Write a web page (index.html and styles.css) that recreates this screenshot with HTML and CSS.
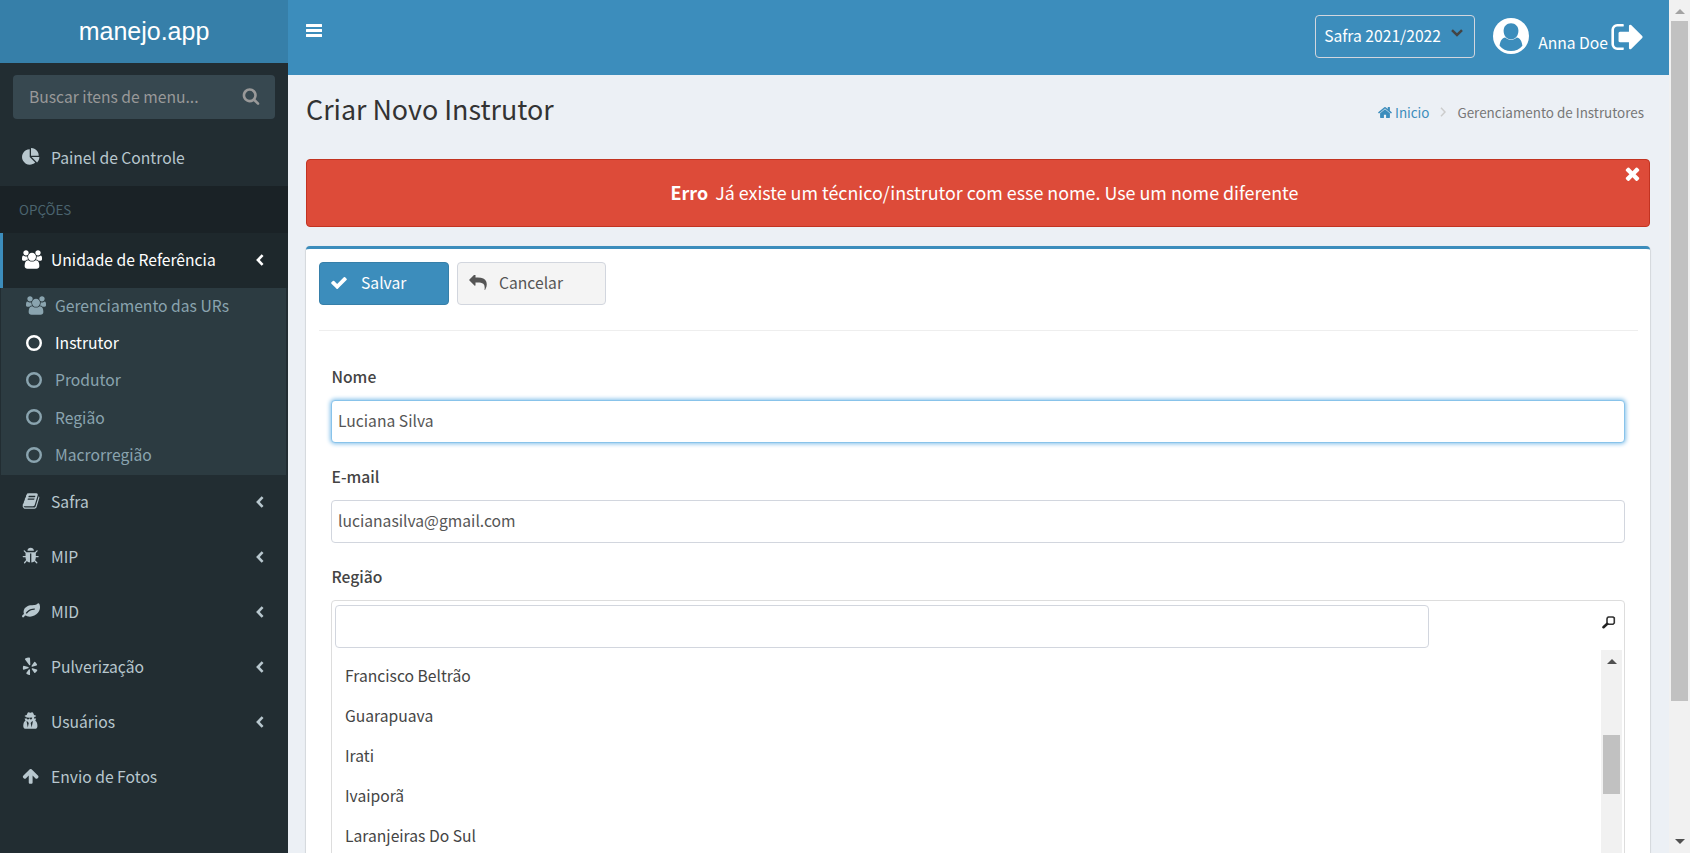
FILE: index.html
```html
<!DOCTYPE html>
<html lang="pt-BR">
<head>
<meta charset="utf-8">
<title>manejo.app</title>
<link rel="stylesheet" href="styles.css">
</head>
<body>
<svg class="defs" aria-hidden="true">
  <symbol id="users" viewBox="0 0 1920 1792"><path d="M593 896q-162 5-265 128h-134q-82 0-138-40.5t-56-118.5q0-353 124-353 6 0 43.5 21t97.5 42.5 119 21.5q67 0 133-23-5 37-5 66 0 159 90 256zm1071 637q0 120-73 189.5t-194 69.5h-874q-121 0-194-69.5t-73-189.5q0-53 3.5-103.5t14-109 26.5-108.5 43-97.5 62-81 85.5-53.5 111.5-20q10 0 43 21.5t73 48 107 48 135 21.5 135-21.5 107-48 73-48 43-21.5q61 0 111.5 20t85.5 53.5 62 81 43 97.5 26.5 108.5 14 109 3.5 103.5zm-1024-1277q0 106-75 181t-181 75-181-75-75-181 75-181 181-75 181 75 75 181zm704 384q0 159-112.5 271.5t-271.5 112.5-271.5-112.5-112.5-271.5 112.5-271.5 271.5-112.5 271.5 112.5 112.5 271.5zm576 225q0 78-56 118.5t-138 40.5h-134q-103-123-265-128 90-97 90-256 0-29-5-66 66 23 133 23 59 0 119-21.5t97.5-42.5 43.5-21q124 0 124 353zm-128-609q0 106-75 181t-181 75-181-75-75-181 75-181 181-75 181 75 75 181z"/></symbol>
  <symbol id="circle" viewBox="0 0 16 16"><circle cx="8" cy="8" r="6.8" fill="none" stroke="currentColor" stroke-width="2.4"/></symbol>
  <symbol id="angle" viewBox="0 0 8 12"><path d="M6.6 1.2 1.9 6l4.7 4.8" fill="none" stroke="currentColor" stroke-width="2.6"/></symbol>
</svg>
<div class="app">
  <aside class="sidebar">
    <a class="logo">manejo.app</a>
    <div class="menu-search">
      <span>Buscar itens de menu...</span>
      <svg class="search-icon" viewBox="0 0 1792 1792"><path d="M1216 832q0-185-131.5-316.5t-316.5-131.5-316.5 131.5-131.5 316.5 131.5 316.5 316.5 131.5 316.5-131.5 131.5-316.5zm512 832q0 52-38 90t-90 38q-54 0-90-38l-343-342q-179 124-399 124-143 0-273.5-55.5t-225-150-150-225-55.5-273.5 55.5-273.5 150-225 225-150 273.5-55.5 273.5 55.5 225 150 150 225 55.5 273.5q0 220-124 399l343 343q37 37 37 90z"/></svg>
    </div>
    <nav class="menu">
      <a class="item first"><svg class="ico" viewBox="0 0 1792 1792"><path d="M768 890l546 546q-106 108-247.5 168t-298.5 60q-209 0-385.5-103t-279.5-279.5-103-385.5 103-385.5 279.5-279.5 385.5-103v762zm187 6h773q0 157-60 298.5t-168 247.5zm709-128h-768v-768q209 0 385.5 103t279.5 279.5 103 385.5z"/></svg><span>Painel de Controle</span></a>
      <div class="menu-header">OPÇÕES</div>
      <a class="item active"><svg class="ico wide"><use href="#users"/></svg><span>Unidade de Referência</span><svg class="angle"><use href="#angle"/></svg></a>
      <div class="submenu">
        <a><svg class="ico wide"><use href="#users"/></svg><span>Gerenciamento das URs</span></a>
        <a class="current"><svg class="dot"><use href="#circle"/></svg><span>Instrutor</span></a>
        <a><svg class="dot"><use href="#circle"/></svg><span>Produtor</span></a>
        <a><svg class="dot"><use href="#circle"/></svg><span>Região</span></a>
        <a><svg class="dot"><use href="#circle"/></svg><span>Macrorregião</span></a>
      </div>
      <a class="item"><svg class="ico" viewBox="0 0 1792 1792"><path d="M1703 478q40 57 18 129l-275 906q-19 64-76.5 107.5t-122.5 43.5h-923q-77 0-148.5-53.5t-99.5-131.5q-24-67-2-127 0-4 3-27t4-37q1-8-3-21.5t-3-19.5q2-11 8-21t16.5-23.5 16.5-23.5q23-38 45-91.5t30-91.5q3-10 .5-30t-.5-28q3-11 17-28t17-23q21-36 42-92t25-90q1-9-2.5-32t.5-28q4-13 22-30.5t22-22.5q19-26 42.5-84.5t27.5-96.5q1-8-3-25.5t-2-26.5q2-8 9-18t18-23 17-21q8-12 16.5-30.5t15-35 16-36 19.5-32 26.5-23.5 36-11.5 47.5 5.5l-1 3q38-9 51-9h761q74 0 114 56t18 130l-274 906q-36 119-71.5 153.5t-128.5 34.5h-869q-27 0-38 15-11 16-1 43 24 70 144 70h923q29 0 56-15.5t35-41.5l300-987q7-22 5-57 38 15 59 43zm-1064 2q-4 13 2 22.5t20 9.5h608q13 0 25.5-9.5t16.5-22.5l21-64q4-13-2-22.5t-20-9.5h-608q-13 0-25.5 9.5t-16.5 22.5zm-83 256q-4 13 2 22.5t20 9.5h608q13 0 25.5-9.5t16.5-22.5l21-64q4-13-2-22.5t-20-9.5h-608q-13 0-25.5 9.5t-16.5 22.5z"/></svg><span>Safra</span><svg class="angle"><use href="#angle"/></svg></a>
      <a class="item"><svg class="ico" viewBox="32 0 1792 1792"><path d="M1696 960q0 26-19 45t-45 19h-224q0 171-67 290l208 209q19 19 19 45t-19 45q-18 19-45 19t-45-19l-198-197q-5 5-15 13t-42 28.5-65 36.5-82 29-97 13v-896h-128v896q-51 0-101.5-13.5t-87-33-66-39-43.5-32.5l-15-14-183 207q-20 21-48 21-24 0-43-16-19-18-20.5-44.5t15.5-46.5l202-227q-58-114-58-274h-224q-26 0-45-19t-19-45 19-45 45-19h224v-294l-173-173q-19-19-19-45t19-45 45-19 45 19l173 173h844l173-173q19-19 45-19t45 19 19 45-19 45l-173 173v294h224q26 0 45 19t19 45zm-480-576h-640q0-133 93.5-226.5t226.5-93.5 226.5 93.5 93.5 226.5z"/></svg><span>MIP</span><svg class="angle"><use href="#angle"/></svg></a>
      <a class="item"><svg class="ico" viewBox="0 0 1792 1792"><path d="M1280 704q0-26-19-45t-45-19q-172 0-318 49.5t-259.5 134-235.5 219.5q-19 21-19 45 0 26 19 45t45 19q24 0 45-19 27-24 74-71t67-66q137-124 268.5-176t313.5-52q26 0 45-19t19-45zm512-198q0 95-20 193-46 224-184.5 383t-357.5 268q-214 108-438 108-148 0-286-47-15-5-88-42t-96-37q-16 0-39.5 32t-45 70-52.5 70-60 32q-43 0-63.5-17.5t-45.5-59.5q-2-4-6-11t-5.5-10-3-9.5-1.5-13.5q0-35 31-73.5t68-65.5 68-56 31-48q0-4-14-38t-16-44q-9-51-9-104 0-115 43.5-220t119-184.5 170.5-139 204-95.5q55-18 145-25.5t179.5-9 178.5-6 163.5-24 113.5-56.5l29.5-29.5 29.5-28 27-20 36.5-16 43.5-4.5q39 0 70.5 46t47.5 112 24 124 8 96z"/></svg><span>MID</span><svg class="angle"><use href="#angle"/></svg></a>
      <a class="item"><svg class="ico" viewBox="-.5 -.3 18 18.500"><path d="M2.600 1.300Q4.500 0 6.700.100q.700.100.800.800l.300 6.500q-.100 1.300-1.200.600L2.400 2.300q-.300-.600.200-1zM1 8.600l4.700 1.500q.900.500 0 1.100L1 12.800q-.700.100-.800-.700Q0 10.400.400 9.100.600 8.500 1 8.600zM6.200 12.600q1.200-.700 1.300.500v4.500q-.100.700-.800.600-1.700-.300-2.800-1.300-.400-.500-.100-.900zM9.300 12.200q-.400-1.200.8-1l4.400 1.400q.7.300.4.900-.7 1.500-2 2.500-.6.400-1-.2zM9.100 8.800l2.700-3.900q.4-.6 1-.1 1.300 1.100 1.900 2.700.2.600-.4.900l-4.500 1.200q-1.200.1-.7-.8z"/></svg><span>Pulverização</span><svg class="angle"><use href="#angle"/></svg></a>
      <a class="item"><svg class="ico" viewBox="128 0 1792 1792"><path d="M704 1536l96-448-96-128-128-64zm384 0l128-640-128 64-96 128zm64-967q-2-4-4-6-10-8-96-8-70 0-167 19-7 2-21 2t-21-2q-97-19-167-19-86 0-96 8-2 2-4 6 2 18 4 27 2 3 7.5 6.5t7.5 10.5q2 4 7.5 20.5t7 20.5 7.5 17 8.5 17 9 14 12 13.5 14 9.5 17.5 8 20.5 4 24.5 2q36 0 59-12.5t32.5-30 14.5-34.5 11.5-29.5 17.5-12.5h12q11 0 17.5 12.5t11.5 29.5 14.5 34.5 32.5 30 59 12.5q13 0 24.5-2t20.5-4 17.5-8 14-9.5 12-13.5 9-14 8.5-17 7.5-17 7-20.5 7.5-20.5q2-7 7.5-10.5t7.5-6.5q2-9 4-27zm512 849q0 121-73 190t-194 69h-874q-121 0-194-69t-73-190q0-61 4.5-118t19-125.5 37.5-123.5 63.5-103.5 93.5-74.5l-90-220h214q-22-64-22-128 0-12 2-32-194-40-194-96 0-57 210-99 17-62 51.5-134t70.5-114q32-37 76-37 30 0 84 31t84 31 84-31 84-31q44 0 76 37 36 42 70.5 114t51.5 134q210 42 210 99 0 56-194 96 7 81-20 160h214l-82 225q63 33 107.5 96.5t65.5 143.5 29 151.5 8 148.5z"/></svg><span>Usuários</span><svg class="angle"><use href="#angle"/></svg></a>
      <a class="item"><svg class="ico" viewBox="32 0 1792 1792"><path d="M1675 971q0 51-37 90l-75 75q-38 38-91 38-54 0-90-38l-294-293v704q0 52-37.500 84.500t-90.500 32.500h-128q-53 0-90.500-32.500t-37.500-84.500v-704l-294 293q-36 38-90 38t-90-38l-75-75q-38-38-38-90 0-53 38-91l651-651q35-37 90-37 54 0 91 37l651 651q37 39 37 91z"/></svg><span>Envio de Fotos</span></a>
    </nav>
  </aside>
  <main class="main">
    <header class="navbar">
      <svg class="bars" viewBox="0 0 16 14"><path d="M.5 0h15q.5 0 .5.500v2q0 .500-.500.500h-15q-.500 0-.500-.500v-2q0-.500.500-.500zM.500 5h15q.500 0 .500.500v2q0 .500-.500.500h-15q-.500 0-.500-.500v-2q0-.500.500-.500zM.500 10h15q.500 0 .500.500v2q0 .500-.500.500h-15q-.500 0-.500-.500v-2q0-.500.500-.500z"/></svg>
      <div class="season"><span>Safra 2021/2022</span><svg viewBox="0 0 12 8"><path d="M1 1.200 6 6l5-4.800" fill="none" stroke="#444" stroke-width="2.500"/></svg></div>
      <svg class="avatar" viewBox="0 0 36 36"><circle cx="18" cy="18" r="18"/><path class="face" d="M18 5.200c4.400 0 7.400 3.300 7.400 7.500 0 5-3.200 8.700-7.400 8.700s-7.400-3.700-7.400-8.700c0-4.200 3-7.500 7.400-7.500z"/><path class="face" d="M6.600 27.800c.6-4.800 2.500-7.800 5.600-8.200 3.600 3.100 8 3.100 11.600 0 3.100.4 5 3.400 5.600 8.200-2.700 3.300-6.700 5.300-11.400 5.300s-8.700-2-11.400-5.300z"/></svg>
      <span class="user">Anna Doe</span>
      <svg class="signout" viewBox="96 256 1536 1280"><path d="M704 1440q0 4 1 20t.5 26.500-3 23.500-10 19.500-20.500 6.500h-288q-119 0-203.500-84.500t-84.500-203.500v-704q0-119 84.500-203.500t203.500-84.500h288q13 0 22.500 9.500t9.500 22.500q0 4 1 20t.5 26.500-3 23.500-10 19.500-20.500 6.500h-288q-66 0-113 47t-47 113v704q0 66 47 113t113 47h280l11.500 1 11.500 3 8 5.500 7 9 2 13.500zm928-544q0 26-19 45l-544 544q-19 19-45 19t-45-19-19-45v-288h-448q-26 0-45-19t-19-45v-384q0-26 19-45t45-19h448v-288q0-26 19-45t45-19 45 19l544 544q19 19 19 45z"/></svg>
    </header>
    <section class="heading">
      <h1>Criar Novo Instrutor</h1>
      <div class="crumbs">
        <svg class="home" viewBox="80 250 1632 1290"><path d="M1472 992v480q0 26-19 45t-45 19h-384v-384h-256v384h-384q-26 0-45-19t-19-45v-480q0-1 .5-3t.5-3l575-474 575 474q1 2 1 6zm223-69l-62 74q-8 9-21 11h-3q-13 0-21-7l-692-577-692 577q-12 8-24 7-13-2-21-11l-62-74q-8-10-7-23.500t11-21.500l719-599q32-26 76-26t76 26l244 204v-195q0-14 9-23t23-9h192q14 0 23 9t9 23v408l219 182q10 8 11 21.500t-7 23.500z"/></svg>
        <a>Inicio</a>
        <svg class="sep" viewBox="0 0 6 10"><path d="M1 .8 5 5 1 9.200" fill="none" stroke="#ccc" stroke-width="1.500"/></svg>
        <span>Gerenciamento de Instrutores</span>
      </div>
    </section>
    <div class="alert">
      <p><b>Erro</b>Já existe um técnico/instrutor com esse nome. Use um nome diferente</p>
      <svg class="close" viewBox="302 322 1188 1232"><path d="M1490 1322q0 40-28 68l-136 136q-28 28-68 28t-68-28l-294-294-294 294q-28 28-68 28t-68-28l-136-136q-28-28-28-68t28-68l294-294-294-294q-28-28-28-68t28-68l136-136q28-28 68-28t68 28l294 294 294-294q28-28 68-28t68 28l136 136q28 28 28 68t-28 68l-294 294 294 294q28 28 28 68z"/></svg>
    </div>
    <section class="box">
      <div class="actions">
        <button class="btn primary"><svg class="check" viewBox="121 334 1550 1188"><path d="M1671 566q0 40-28 68l-724 724-136 136q-28 28-68 28t-68-28l-136-136-362-362q-28-28-28-68t28-68l136-136q28-28 68-28t68 28l294 295 656-657q28-28 68-28t68 28l136 136q28 28 28 68z"/></svg><span>Salvar</span></button>
        <button class="btn cancel"><svg class="reply" viewBox="0 128 1792 1536"><path d="M1792 1120q0 166-127 451-3 7-10.500 24t-13.500 30-13 22q-12 17-28 17-15 0-23.500-10t-8.500-25q0-9 2.500-26.500t2.500-23.500q5-68 5-123 0-101-17.500-181t-48.500-138.500-80-101-105.500-69.500-133-42.500-154-21.500-175.500-6h-224v256q0 26-19 45t-45 19-45-19l-512-512q-19-19-19-45t19-45l512-512q19-19 45-19t45 19 19 45v256h224q713 0 875 403 53 134 53 333z"/></svg><span>Cancelar</span></button>
      </div>
      <form class="form">
        <label>Nome</label>
        <div class="input focus">Luciana Silva</div>
        <label>E-mail</label>
        <div class="input">lucianasilva@gmail.com</div>
        <label class="last">Região</label>
        <div class="listbox">
          <div class="filter">
            <div class="input"></div>
            <svg class="lens" viewBox="0 0 14 13"><path d="M5.500 1.500 6.500 1h4.500l1.300 1v5l-1.300 1.300h-4.500l-1.500-1.300v-4z" fill="none" stroke="#333" stroke-width="1.600"/><path d="M5 8 1.500 11.200" fill="none" stroke="#222" stroke-width="2.600" stroke-linecap="round"/></svg>
          </div>
          <div class="list">
            <ul>
              <li>Francisco Beltrão</li>
              <li>Guarapuava</li>
              <li>Irati</li>
              <li>Ivaiporã</li>
              <li>Laranjeiras Do Sul</li>
            </ul>
            <div class="scroll"><i class="up"></i><i class="thumb"></i></div>
          </div>
        </div>
      </form>
    </section>
  </main>
  <div class="page-scroll"><i class="up"></i><i class="thumb"></i><i class="down"></i></div>
</div>
</body>
</html>
```
FILE: styles.css
```css
* { box-sizing: border-box; }
body {
  margin: 0;
  overflow: hidden;
  background: #ecf0f5;
  color: #444;
  font: 15.67px/25px "Noto Sans CJK SC", "Open Sans", sans-serif;
}
svg { fill: currentColor; flex: none; display: block; }
.defs { position: absolute; width: 0; height: 0; }
.app { display: flex; height: 853px; overflow: hidden; }

/* sidebar */
.sidebar { width: 288px; flex: none; background: #222d32; color: #b8c7ce; }
.logo {
  display: flex; align-items: center; justify-content: center;
  height: 63px; background: #367fa9; color: #fff;
  font: 25px "Liberation Sans", Arial, sans-serif;
}
.menu-search {
  display: flex; align-items: center; justify-content: space-between;
  height: 44px; margin: 12px 13px 11px; padding: 0 15px 2px 16px;
  border-radius: 4px; background: #374850; color: #999;
}
.search-icon { width: 18px; height: 18px; margin-top: -1px; }
.item {
  display: flex; align-items: center;
  height: 55px; padding: 0 24px 3px 19px;
  border-left: 3px solid transparent;
}
.first { padding-bottom: 1px; }
.item .ico { margin-right: 11px; }
.item .ico.wide { margin-right: 9px; }
.item .angle { margin: 2px 0 0 auto; }
.active { background: #1e282c; border-left-color: #3c8dbc; color: #fff; }
.ico { width: 18px; height: 18px; }
.ico.wide { width: 20px; height: 19px; }
.angle { width: 8px; height: 12px; }
.menu-header {
  height: 47px; margin-top: 1px; padding: 0 19px;
  background: #1a2226; color: #4b646f;
  font-size: 13.4px; line-height: 47px;
}
.submenu { height: 187px; margin: 0 2px 0 1px; background: #2c3b41; color: #8aa4af; }
.submenu a { display: flex; align-items: center; height: 37.4px; padding: 0 0 3px 25px; }
.submenu .ico { margin-right: 9px; }
.submenu .dot { width: 16px; height: 16px; margin-right: 13px; }
.submenu .current { color: #fff; }

/* top bar */
.main { flex: 1; min-width: 0; overflow: hidden; }
.navbar {
  display: flex; align-items: flex-start;
  height: 75px; padding-left: 18px; padding-right: 26px;
  background: #3c8dbc; color: #fff;
}
.bars { width: 16px; height: 14px; margin-top: 24px; }
.season {
  display: flex; align-items: center; justify-content: space-between;
  width: 160px; height: 43px; margin: 15px 18px 0 auto; padding: 0 11px 2px 8px;
  border: 1px solid #d2d6de; border-radius: 4px;
}
.season svg { width: 12px; height: 8px; margin-top: -5px; }
.avatar { width: 36px; height: 36px; margin: 18px 9px 0 0; }
.avatar .face { fill: #3c8dbc; }
.user { margin: 30px 3px 0 0; }
.signout { width: 32px; height: 26px; margin-top: 24px; }

/* heading */
.heading { display: flex; justify-content: space-between; height: 84px; padding: 17px 25px 0 18px; }
h1 { margin: 0; color: #333; font-size: 26.85px; font-weight: 400; line-height: 33px; }
.crumbs { display: flex; align-items: center; height: 40px; color: #777; font-size: 13.43px; }
.crumbs a, .home { color: #3c8dbc; }
.home { width: 14px; height: 11px; margin-right: 3px; }
.sep { width: 6px; height: 10px; margin: 0 11px; }

/* alert */
.alert {
  position: relative; height: 68px; margin: 0 19px 19px 18px;
  border: 1px solid #c23321; border-radius: 4px;
  background: #dd4b39; color: #fff;
}
.alert p { margin: 0 0 0 13px; font-size: 17.87px; line-height: 64px; text-align: center; }
.alert b { margin-right: 7px; }
.close { position: absolute; top: 7px; right: 9px; width: 15px; height: 14px; }

/* form box */
.box {
  height: 620px; margin: 0 19px 0 18px; padding: 13px 12px 0 13px;
  border-top: 3px solid #3c8dbc; border-radius: 4px 4px 0 0;
  background: #fff; box-shadow: 0 1px 1px 1px rgba(0, 0, 0, .1);
}
.actions { display: flex; gap: 8px; height: 69px; border-bottom: 1px solid #eee; }
.btn {
  display: flex; align-items: center; height: 43px; padding: 0 11px 2px;
  border: 1px solid #d2d6de; border-radius: 4px;
  background: #f4f4f4; color: #555; font: inherit;
}
.primary { width: 130px; border-color: #367fa9; background: #3c8dbc; color: #fff; }
.cancel { width: 149px; }
.check { width: 16px; height: 12px; margin-right: 14px; }
.reply { width: 18px; height: 15px; margin-right: 12px; }
.form { padding: 31px 13px 0 12px; }
label { display: block; height: 38px; padding-left: .5px; font-weight: 500; line-height: 29px; }
.last { line-height: 30px; }
.input {
  height: 43px; margin-bottom: 19px; padding: 0 6px;
  border: 1px solid #d2d6de; border-radius: 4px;
  background: #fff; color: #555; line-height: 39px;
}
.focus { border-color: #88c3ea; box-shadow: 0 0 4px 1px #84c0ea; }
.listbox { height: 300px; padding: 4px 2px 0 3px; border: 1px solid #ddd; border-radius: 4px; }
.filter { display: flex; justify-content: space-between; height: 45px; }
.filter .input { width: 1094px; margin: 0; }
.lens { width: 14px; height: 13px; margin: 11px 6px 0 0; }
.list { display: flex; justify-content: space-between; }
ul { margin: 6px 0 0; padding: 0 0 0 10px; list-style: none; }
li { height: 40px; line-height: 40px; }
.scroll, .page-scroll {
  display: flex; flex-direction: column; align-items: center;
  width: 21px; flex: none; background: #f1f1f1;
}
.scroll { height: 250px; }
.up, .down { width: 0; height: 0; border: 5px solid transparent; border-top-width: 0; border-bottom: 5px solid #505050; }
.scroll .up { margin: 9px 0 71px; }
.thumb { width: 17px; background: #c1c1c1; }
.scroll .thumb { height: 59px; }
.page-scroll .up { margin: 9px 0 7px; border-bottom-color: #a3a3a3; }
.page-scroll .thumb { height: 680px; }
.down { margin: auto 0 9px; border-bottom-width: 0; border-top: 5px solid #505050; }
```
